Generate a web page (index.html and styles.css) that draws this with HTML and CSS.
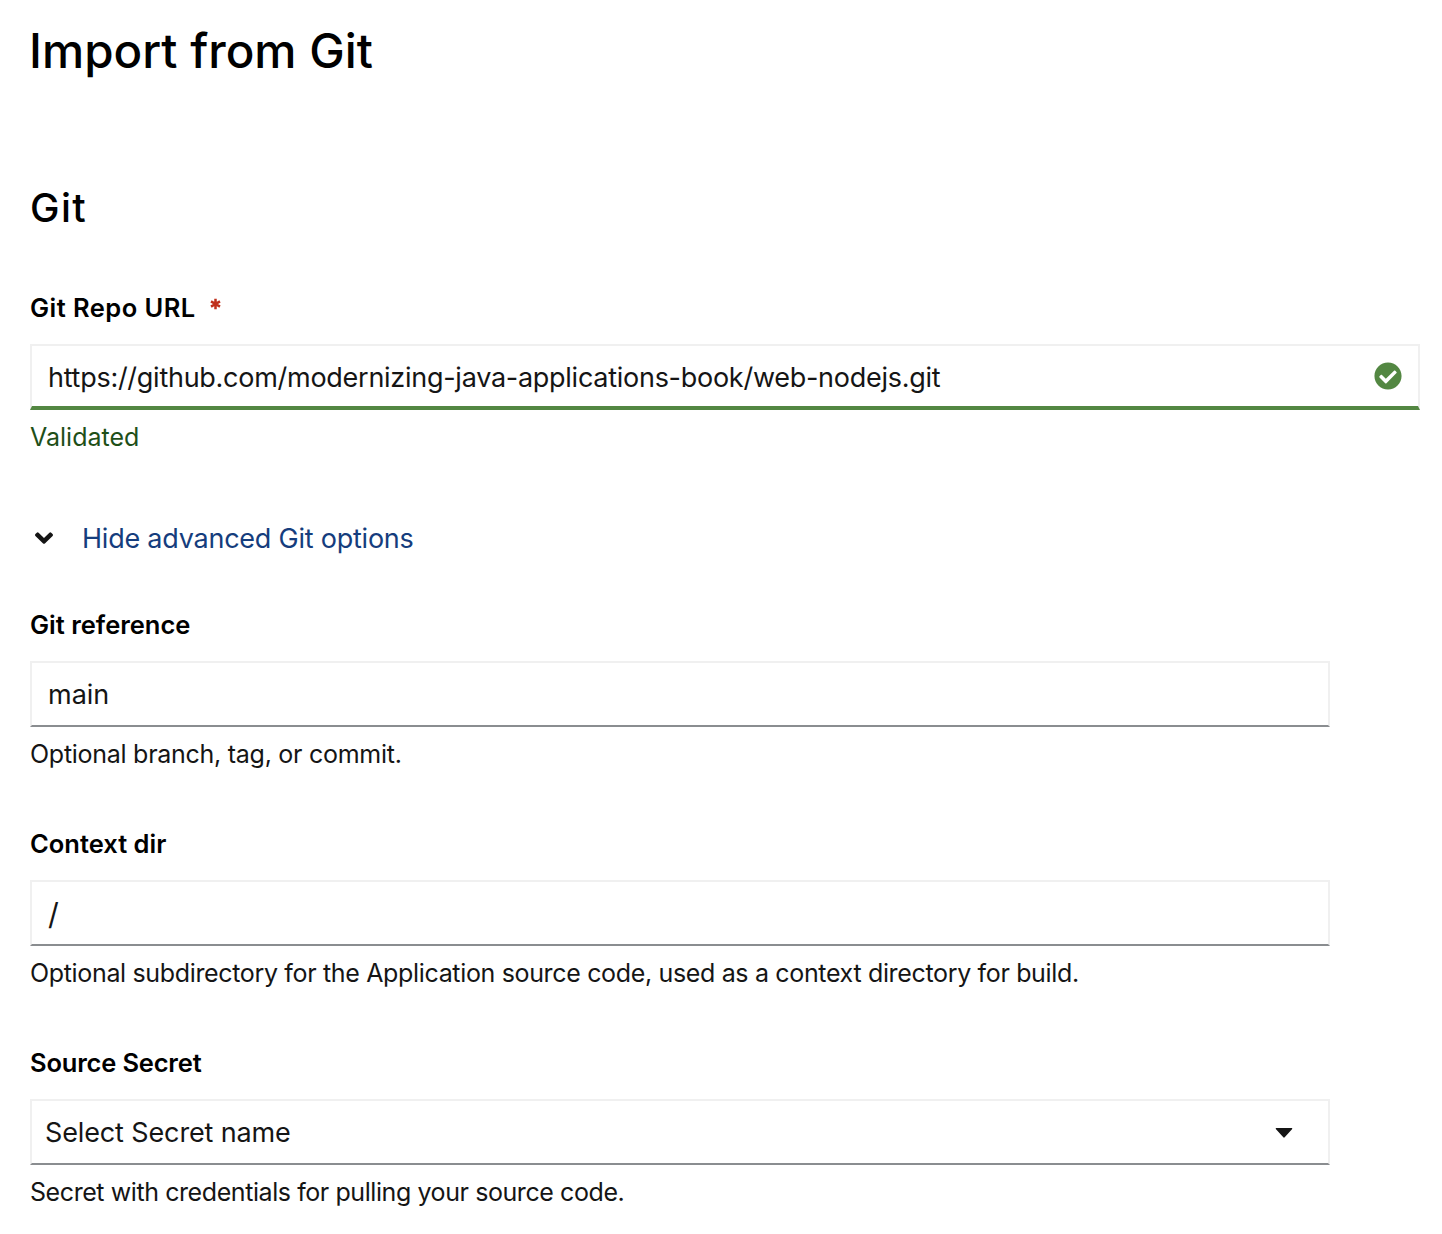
FILE: index.html
```html
<!DOCTYPE html>
<html lang="en">
<head>
<meta charset="utf-8">
<title>Import from Git</title>
<link rel="stylesheet" href="styles.css">
</head>
<body>
<main class="page">
  <h1 class="page-title">Import from Git</h1>
  <form class="form">
    <h2 class="section-title">Git</h2>

    <div class="field">
      <label class="label label-repo" for="repo">Git Repo URL<svg class="required" width="11" height="12" viewBox="0 0 11 12" aria-hidden="true"><path d="M5.5 .8v10.400M1 3.400l9 5.200M10 3.400l-9 5.200"/></svg></label>
      <div class="control control-success">
        <input class="input input-repo" id="repo" type="text" value="https://github.com/modernizing-java-applications-book/web-nodejs.git" spellcheck="false">
        <svg class="status" width="28" height="28" viewBox="0 0 512 512" aria-hidden="true"><path d="M504 256c0 136.967-111.033 248-248 248S8 392.967 8 256 119.033 8 256 8s248 111.033 248 248zM227.314 387.314l184-184c6.248-6.248 6.248-16.379 0-22.627l-22.627-22.627c-6.248-6.249-16.379-6.249-22.628 0L216 308.118l-70.059-70.059c-6.248-6.248-16.379-6.248-22.628 0l-22.627 22.627c-6.248 6.248-6.248 16.379 0 22.627l104 104c6.249 6.249 16.379 6.249 22.628.001z"/></svg>
      </div>
      <p class="helper helper-success">Validated</p>
    </div>

    <button class="toggle" type="button">
      <svg class="chevron" width="20" height="14" viewBox="0 0 20 14" aria-hidden="true"><path d="M1.400 3.100l1.400-1.400q.9-.8 1.800 0L10 7l5.400-5.300q.9-.8 1.800 0l1.400 1.400q.9.900 0 1.800l-7.700 7.500q-.9.800-1.800 0L1.400 4.900q-.9-.9 0-1.800z"/></svg>
      <span>Hide advanced Git options</span>
    </button>

    <div class="field field-nested">
      <label class="label label-ref" for="ref">Git reference</label>
      <div class="control"><input class="input" id="ref" type="text" value="main"></div>
      <p class="helper helper-ref">Optional branch, tag, or commit.</p>
    </div>

    <div class="field field-nested">
      <label class="label label-ref" for="dir">Context dir</label>
      <div class="control"><input class="input input-dir" id="dir" type="text" value="/"></div>
      <p class="helper helper-dir">Optional subdirectory for the Application source code, used as a context directory for build.</p>
    </div>

    <div class="field field-nested">
      <span class="label label-secret">Source Secret</span>
      <button class="control select" type="button">
        <span>Select Secret name</span>
        <svg class="caret" width="18" height="10" viewBox="0 0 18 10" aria-hidden="true"><path d="M1.500 0h15c.8 0 1.100.7.500 1.300L9.700 9.300q-.7.700-1.400 0L1 1.300C.4.700.7 0 1.500 0z"/></svg>
      </button>
      <p class="helper helper-secret">Secret with credentials for pulling your source code.</p>
    </div>
  </form>
</main>
</body>
</html>
```

FILE: styles.css
```css
* { box-sizing: border-box; }

body {
  margin: 0;
  background: #fff;
  color: #151515;
  font-family: Inter, "Liberation Sans", sans-serif;
}

.page { padding: 20px 22px 0 30px; }

.page-title,
.section-title {
  margin: 0;
  color: #000;
  font-weight: 500;
}

.page-title {
  margin-left: -1px;
  font-size: 47.5px;
  line-height: 62px;
  letter-spacing: 0;
}

.form {
  display: flex;
  flex-direction: column;
  padding-top: 100px;
}

.section-title {
  margin-bottom: 54px;
  font-size: 39.5px;
  line-height: 52px;
  letter-spacing: 1.4px;
}

.field {
  display: flex;
  flex-direction: column;
  margin-bottom: 50px;
}

.field-nested { width: 1300px; }

.label {
  display: flex;
  margin-bottom: 17px;
  color: #000;
  font-size: 25.5px;
  font-weight: 600;
  line-height: 39px;
}

.label-repo { letter-spacing: 0.45px; }
.label-ref { letter-spacing: 0; }
.label-secret { letter-spacing: -0.18px; }

.required {
  margin: 10px 0 0 14px;
  fill: none;
  stroke: #c0301c;
  stroke-width: 2.5;
}

.control {
  display: flex;
  align-items: center;
  width: 100%;
  height: 66px;
  padding: 0 16px;
  border: 2px solid #f0f0f0;
  border-bottom-color: #8a8d90;
  background: #fff;
}

.control-success {
  border-bottom: 4px solid #538742;
}

.input {
  flex: 1;
  min-width: 0;
  padding: 2px 0 0;
  border: 0;
  outline: 0;
  background: none;
  color: #151515;
  font: 400 27px/40px Inter, "Liberation Sans", sans-serif;
}

.input-repo {
  padding-top: 4px;
  letter-spacing: -0.27px;
}

.input-dir { font-size: 30px; }

.status { fill: #538742; }

.helper {
  margin: 8px 0 0;
  font-size: 25px;
  line-height: 39px;
}

.helper-success { color: #1e4f18; }
.helper-ref { letter-spacing: -0.27px; }
.helper-dir { letter-spacing: -0.34px; }
.helper-secret { letter-spacing: -0.42px; }

.toggle {
  display: flex;
  align-items: center;
  gap: 28px;
  height: 42px;
  margin: 10px 0 46px;
  padding: 0 0 0 4px;
  border: 0;
  background: none;
  color: #153d7d;
  font: 400 27px/42px Inter, "Liberation Sans", sans-serif;
  letter-spacing: -0.23px;
}

.toggle span { padding-top: 1px; }

.chevron { fill: #151515; }

.select {
  justify-content: space-between;
  padding: 2px 35px 0 13px;
  color: #151515;
  font: 400 27px/40px Inter, "Liberation Sans", sans-serif;
  letter-spacing: -0.13px;
}

.caret { fill: #151515; }
```
